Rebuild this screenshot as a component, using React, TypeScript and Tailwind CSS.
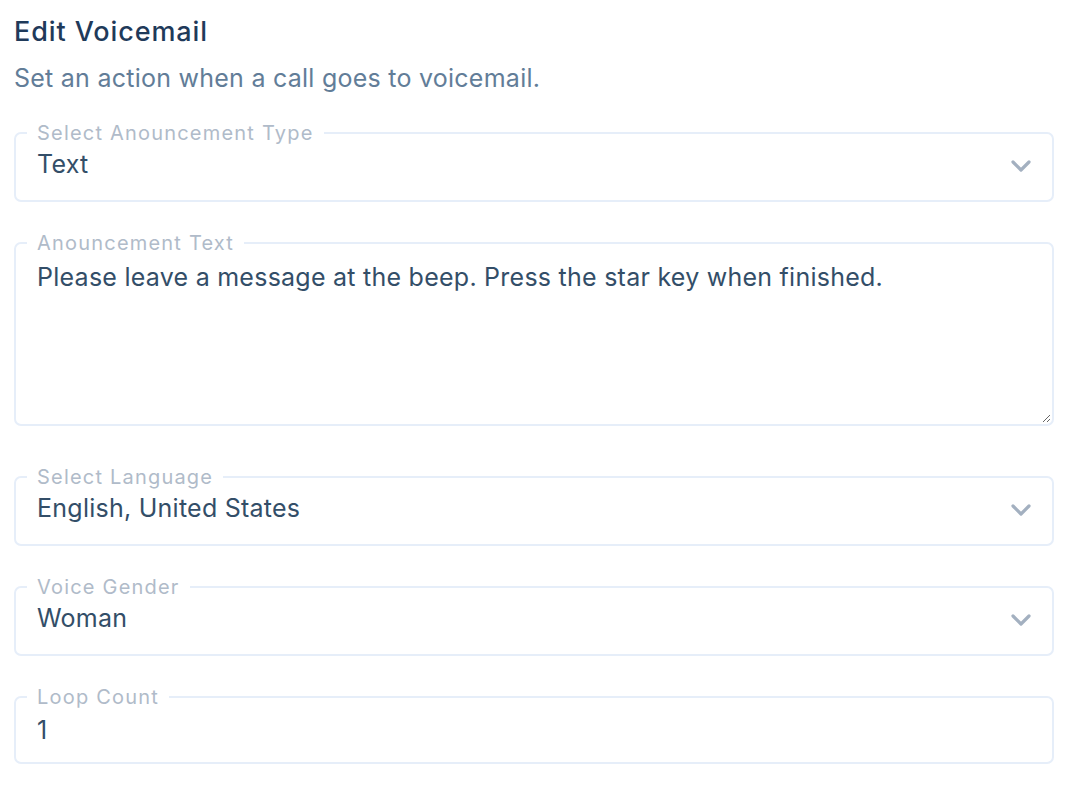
import React, { useState } from 'react';

const ChevronDown = () => (
  <svg width="22" height="14" viewBox="0 0 22 14" fill="none" className="shrink-0 mt-[3px]">
    <path d="M3 3l8 8 8-8" stroke="#a3b0c0" strokeWidth="3.2" strokeLinecap="round" strokeLinejoin="round" />
  </svg>
);

interface SelectFieldProps {
  label: string;
  value: string;
}

const SelectField: React.FC<SelectFieldProps> = ({ label, value }) => (
  <fieldset className="rounded-[7px] border-2 border-[#e6eef9] pl-[11px] pr-[20px] pb-[21px] pt-[4px]">
    <legend className="px-[10px] text-[20px] leading-[24px] tracking-[1.2px] text-[#b0bbc9]">{label}</legend>
    <div className="flex items-center justify-between pl-[10px]">
      <span className="text-[25px] leading-[30px] tracking-[0.25px] text-[#334e68]">{value}</span>
      <ChevronDown />
    </div>
  </fieldset>
);

export default function App() {
  const [text, setText] = useState('Please leave a message at the beep. Press the star key when finished.');

  return (
    <div className="w-[1054px] pl-[14px] pt-[14px] bg-white" style={{ fontFamily: 'Inter, "Noto Sans", sans-serif' }}>
      <h1 className="text-[27px] leading-[36px] font-medium tracking-[0.9px] text-[#1f3a5a]">Edit Voicemail</h1>
      <p className="mt-[13px] text-[25px] leading-[30px] tracking-[0.25px] text-[#627d98]">Set an action when a call goes to voicemail.</p>

      <div className="mt-[28px] flex flex-col gap-[29px]">
        <SelectField label="Select Anouncement Type" value="Text" />

        {/* Announcement text */}
        <fieldset className="rounded-[7px] border-2 border-[#e6eef9] pl-[11px] pr-[1px] pb-[1px] pt-0">
          <legend className="px-[10px] text-[20px] leading-[24px] tracking-[1.2px] text-[#b0bbc9]">Anouncement Text</legend>
          <textarea
            className="block w-full h-[168px] resize-y pl-[10px] pt-[7px] text-[25px] leading-[30px] tracking-[0.25px] text-[#334e68] outline-none"
            value={text}
            onChange={(e) => setText(e.target.value)}
          />
        </fieldset>

        <div className="mt-[10px]">
          <SelectField label="Select Language" value="English, United States" />
        </div>
        <SelectField label="Voice Gender" value="Woman" />

        <fieldset className="rounded-[7px] border-2 border-[#e6eef9] pl-[11px] pr-[20px] pb-[17px] pt-[6px]">
          <legend className="px-[10px] text-[20px] leading-[24px] tracking-[1.2px] text-[#b0bbc9]">Loop Count</legend>
          <div className="pl-[10px] text-[25px] leading-[30px] tracking-[0.25px] text-[#334e68]">1</div>
        </fieldset>
      </div>
    </div>
  );
}
